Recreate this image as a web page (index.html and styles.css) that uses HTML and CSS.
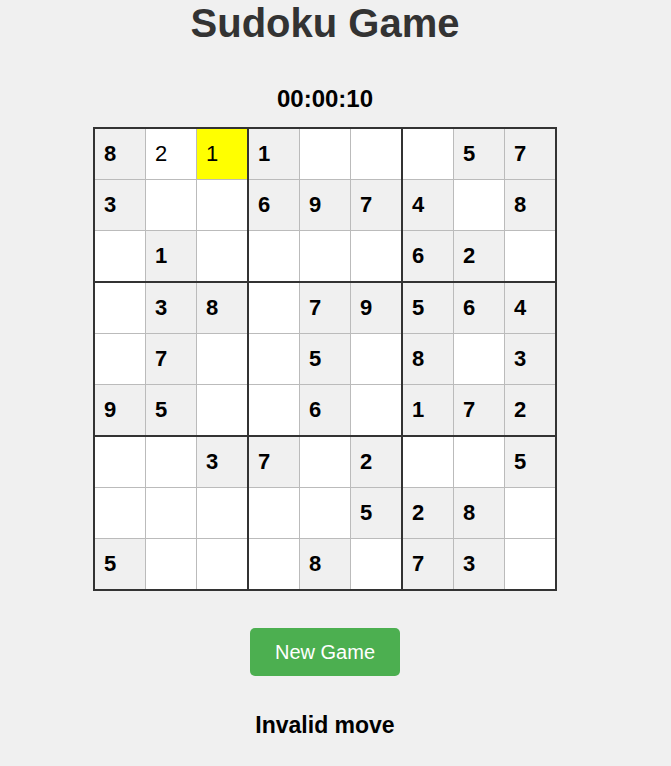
FILE: index.html
```html
<!DOCTYPE html>
<html lang="en">
<head>
<meta charset="utf-8">
<title>Sudoku Game</title>
<link rel="stylesheet" href="styles.css">
</head>
<body>
<div class="app">
  <h1 class="title">Sudoku Game</h1>
  <div class="timer">00:00:10</div>
  <table class="board">
    <tr><td class="fixed">8</td><td class="user">2</td><td class="user selected">1</td><td class="fixed">1</td><td></td><td></td><td></td><td class="fixed">5</td><td class="fixed">7</td></tr>
    <tr><td class="fixed">3</td><td></td><td></td><td class="fixed">6</td><td class="fixed">9</td><td class="fixed">7</td><td class="fixed">4</td><td></td><td class="fixed">8</td></tr>
    <tr><td></td><td class="fixed">1</td><td></td><td></td><td></td><td></td><td class="fixed">6</td><td class="fixed">2</td><td></td></tr>
    <tr><td></td><td class="fixed">3</td><td class="fixed">8</td><td></td><td class="fixed">7</td><td class="fixed">9</td><td class="fixed">5</td><td class="fixed">6</td><td class="fixed">4</td></tr>
    <tr><td></td><td class="fixed">7</td><td></td><td></td><td class="fixed">5</td><td></td><td class="fixed">8</td><td></td><td class="fixed">3</td></tr>
    <tr><td class="fixed">9</td><td class="fixed">5</td><td></td><td></td><td class="fixed">6</td><td></td><td class="fixed">1</td><td class="fixed">7</td><td class="fixed">2</td></tr>
    <tr><td></td><td></td><td class="fixed">3</td><td class="fixed">7</td><td></td><td class="fixed">2</td><td></td><td></td><td class="fixed">5</td></tr>
    <tr><td></td><td></td><td></td><td></td><td></td><td class="fixed">5</td><td class="fixed">2</td><td class="fixed">8</td><td></td></tr>
    <tr><td class="fixed">5</td><td></td><td></td><td></td><td class="fixed">8</td><td></td><td class="fixed">7</td><td class="fixed">3</td><td></td></tr>
  </table>
  <button class="new-game" type="button">New Game</button>
  <div class="message">Invalid move</div>
</div>
</body>
</html>
```

FILE: styles.css
```css
html, body {
  margin: 0;
  padding: 0;
  background: #f0f0f0;
}

body {
  font-family: "Liberation Sans", Arial, sans-serif;
  color: #000;
}

.app {
  width: 650px;
  display: flex;
  flex-direction: column;
  align-items: center;
}

.title {
  margin: 0;
  font-size: 40px;
  font-weight: bold;
  color: #333;
  line-height: 46px;
}

.timer {
  margin-top: 39px;
  font-size: 24px;
  font-weight: bold;
  line-height: 28px;
}

.board {
  margin-top: 14px;
  border-collapse: collapse;
  border: 2px solid #333;
  background: #fff;
}

.board td {
  width: 41px;
  height: 50px;
  padding: 0 0 0 9px;
  box-sizing: content-box;
  border: 1px solid #bbb;
  font-size: 22px;
  text-align: left;
  vertical-align: middle;
  background: #fff;
}

.board td:nth-child(3),
.board td:nth-child(6) {
  border-right: 2px solid #333;
}

.board tr:nth-child(3) td,
.board tr:nth-child(6) td {
  border-bottom: 2px solid #333;
}

.board td.fixed {
  background: #f0f0f0;
  font-weight: bold;
}

.board td.selected {
  background: #ffff00;
}

.new-game {
  margin-top: 37px;
  padding: 12px 25px;
  border: none;
  border-radius: 5px;
  background: #4caf50;
  color: #fff;
  font-family: "Liberation Sans", Arial, sans-serif;
  font-size: 20px;
  line-height: 24px;
}

.message {
  margin-top: 36px;
  font-size: 23px;
  font-weight: bold;
  line-height: 26px;
}
```
